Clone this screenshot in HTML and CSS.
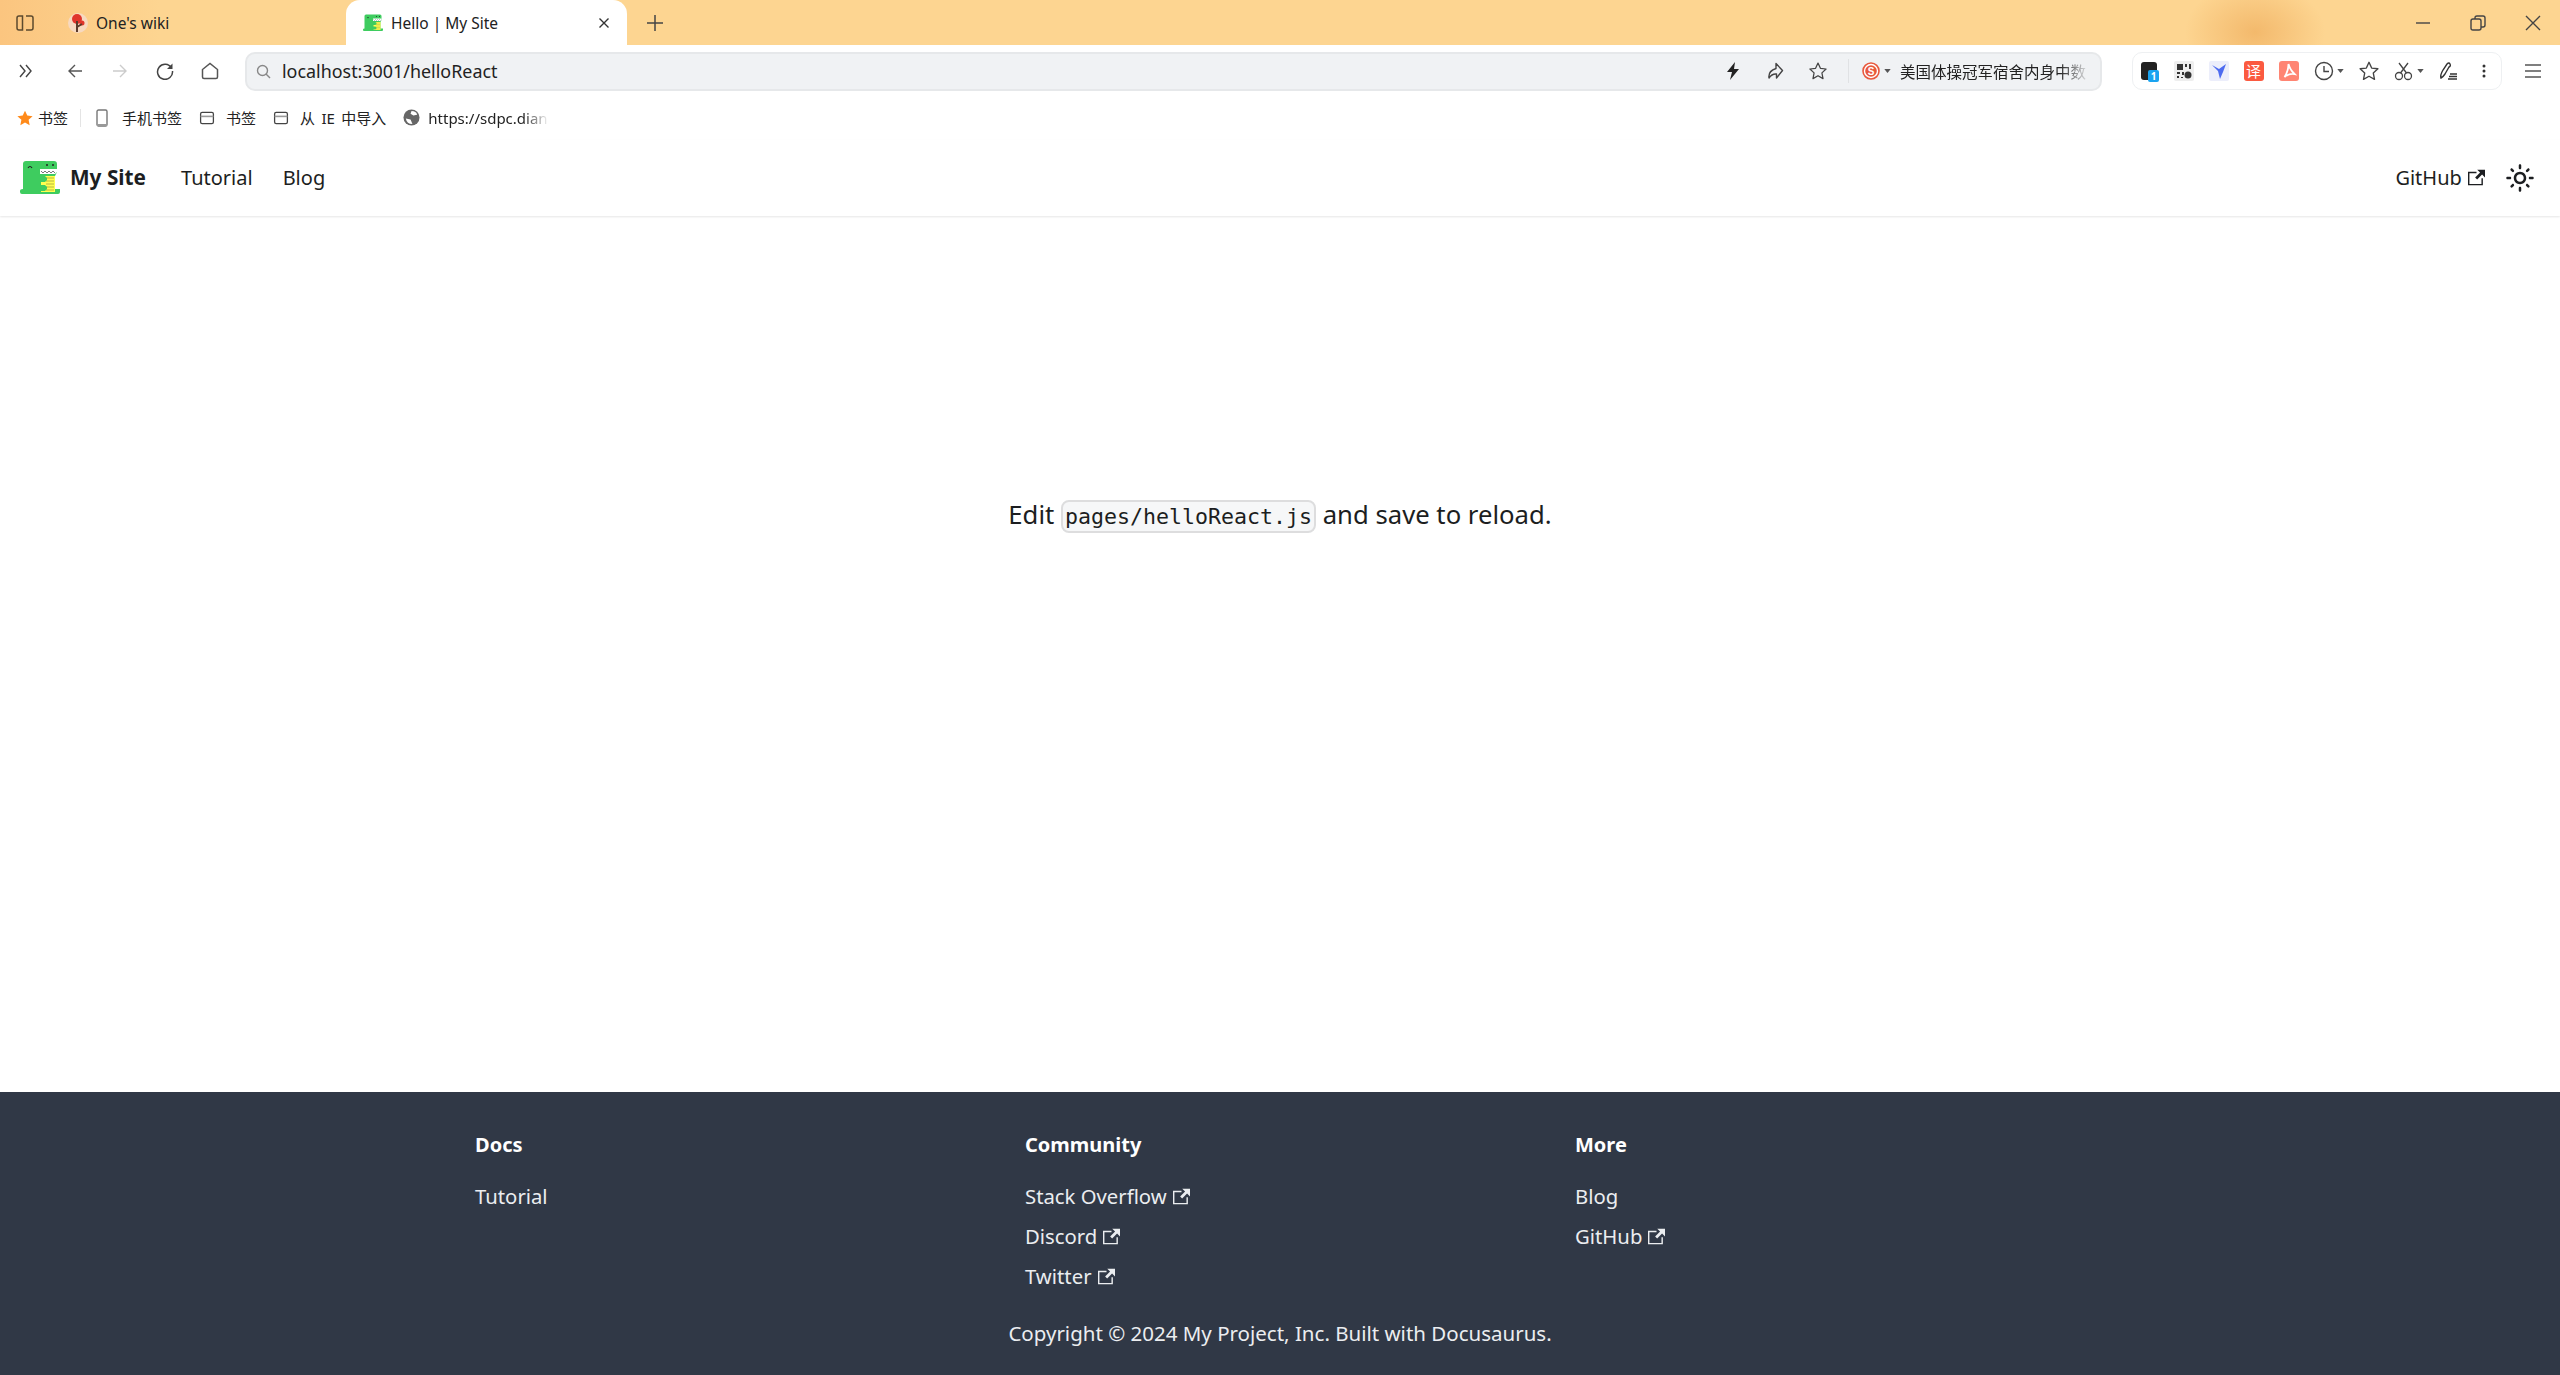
FILE: index.html
```html
<!DOCTYPE html>
<html lang="en">
<head>
    <meta charset="UTF-8">
    <meta name="viewport" content="width=device-width, initial-scale=1.0">
    <title>Hello | My Site</title>
    <link rel="stylesheet" href="styles.css">
</head>
<body>

    <svg class="defs" width="0" height="0">
        <symbol id="ext" viewBox="0 0 24 24"><path fill="currentColor" d="M21 13v10h-21v-19h12v2h-10v15h17v-8h2zm3-12h-10.988l4.035 4-6.977 7.07 2.828 2.828 6.977-7.07 4.125 4.172v-11z"/></symbol>
        <symbol id="dino" viewBox="0 0 40 34">
            <path fill="#3ecc5f" d="M3 3q0-3 3-3h28q3 0 3 3v8l-2 4v13h5v3q0 2-2 2H2q-2 0-2-2v-1q0-2 3-2z"/>
            <path fill="#fff" d="M20 8h17v3l-2 2H20z"/>
            <path fill="none" stroke="#555" stroke-width=".8" d="M21 10l2 2 2-2 2 2 2-2 2 2 2-2 2 2"/>
            <path fill="#ffff50" d="M21 15h14v16H21z"/>
            <path fill="none" stroke="#a5a53c" stroke-width=".8" d="M26 17h8M26 20h8M26 23h8M26 26h8M26 29h8"/>
            <path fill="#3ecc5f" d="M19 15h6l2 2v2l-2 2h-6zM19 24h6l2 2v2l-2 2h-6z"/>
            <path fill="none" stroke="#222" stroke-width="1.200" d="M8 7q2-3 4 0"/>
            <circle cx="27" cy="4" r="1" fill="#222"/><circle cx="33" cy="4" r="1" fill="#222"/>
        </symbol>
        <symbol id="folder" viewBox="0 0 20 20"><path fill="none" stroke="#444" stroke-width="1.600" d="M2 5q0-2 2-2h12q2 0 2 2v10q0 2-2 2H4q-2 0-2-2z"/><path fill="#999" d="M2 7h16v2H2z"/></symbol>
        <symbol id="star" viewBox="0 0 24 24"><path fill="none" stroke="#444" stroke-width="1.500" stroke-linejoin="round" d="M12 2.500l2.900 6.300 6.800.8-5 4.700 1.300 6.800-6-3.400-6 3.400 1.300-6.800-5-4.700 6.800-.8z"/></symbol>
        <symbol id="caret" viewBox="0 0 8 5"><path fill="#555" d="M0 0h8L4 5z"/></symbol>
    </svg>

    <div class="tabbar">
        <span class="tab-side">
            <svg width="18" height="16" viewBox="0 0 18 16"><path fill="none" stroke="#5c4a2e" stroke-width="1.500" d="M3 1h3.500v14H3q-2 0-2-2V3q0-2 2-2zM10 1h5q2 0 2 2v10q0 2-2 2h-5"/></svg>
        </span>
        <div class="tab">
            <svg width="20" height="20" viewBox="0 0 20 20"><circle cx="10" cy="10" r="10" fill="#f7d9c0"/><circle cx="9" cy="6" r="5" fill="#e0352b"/><circle cx="14" cy="10" r="2.500" fill="#e0352b"/><path fill="none" stroke="#5b3a29" stroke-width="2" d="M9 8v11M9 14l5-3"/></svg>
            <span>One's wiki</span>
        </div>
        <div class="tab tab-active">
            <svg width="20" height="20"><use href="#dino"/></svg>
            <span class="tab-name">Hello | My Site</span>
            <svg class="tab-close" width="12" height="12" viewBox="0 0 12 12"><path stroke="#333" stroke-width="1.400" d="M1.500 1.500l9 9M10.500 1.500l-9 9"/></svg>
        </div>
        <svg class="tab-new" width="16" height="16" viewBox="0 0 16 16"><path stroke="#444" stroke-width="1.500" d="M8 0v16M0 8h16"/></svg>
        <div class="winbtns">
            <svg width="16" height="16" viewBox="0 0 16 16"><path stroke="#444" stroke-width="1.400" d="M1 8h14"/></svg>
            <svg width="18" height="18" viewBox="0 0 18 18"><path fill="none" stroke="#444" stroke-width="1.400" d="M2 7q0-2 2-2h6q2 0 2 2v7q0 2-2 2H4q-2 0-2-2zM6 5V4q0-2 2-2h6q2 0 2 2v7q0 2-2 2h-2"/></svg>
            <svg width="16" height="16" viewBox="0 0 16 16"><path stroke="#444" stroke-width="1.400" d="M1 1l14 14M15 1L1 15"/></svg>
        </div>
    </div>

    <div class="toolbar">
        <div class="navbtns">
            <span class="nav-slot nav-slot-first"><svg width="16" height="14" viewBox="0 0 16 14"><path fill="none" stroke="#444" stroke-width="1.400" d="M2 1l5 6-5 6M8 1l5 6-5 6"/></svg></span>
            <span class="nav-slot"><svg width="16" height="16" viewBox="0 0 16 16"><path fill="none" stroke="#555" stroke-width="1.400" d="M15 8H2M8 2L2 8l6 6"/></svg></span>
            <span class="nav-slot"><svg width="16" height="16" viewBox="0 0 16 16"><path fill="none" stroke="#ccc" stroke-width="1.400" d="M1 8h13M8 2l6 6-6 6"/></svg></span>
            <span class="nav-slot"><svg width="18" height="18" viewBox="0 0 18 18"><path fill="none" stroke="#444" stroke-width="1.500" d="M15.500 6A7.500 7.500 0 1 0 16.500 9"/><path fill="#444" d="M16.500 1.500v5.500h-5.500z"/></svg></span>
            <span class="nav-slot"><svg width="18" height="18" viewBox="0 0 18 18"><path fill="none" stroke="#555" stroke-width="1.500" d="M1.500 7.500L9 1.500l7.500 6V15q0 1.500-1.500 1.500H3q-1.500 0-1.500-1.500z"/></svg></span>
        </div>
        <div class="urlbar">
            <svg width="15" height="15" viewBox="0 0 15 15"><circle cx="6.500" cy="6.500" r="5" fill="none" stroke="#888" stroke-width="1.400"/><path stroke="#888" stroke-width="1.400" d="M10 10l4 4"/></svg>
            <span class="url">localhost:3001/helloReact</span>
            <svg class="url-bolt" width="14" height="18" viewBox="0 0 14 18"><path fill="#222" d="M9 0L1 10h5l-2 8 9-11H8z"/></svg>
            <svg class="url-share" width="18" height="18" viewBox="0 0 18 18"><path fill="none" stroke="#444" stroke-width="1.400" stroke-linejoin="round" d="M10 1.500l6.500 7-6 7.500v-4Q6 11.500 3 16q-1-7 7-9.500z"/></svg>
            <svg class="url-star" width="20" height="20"><use href="#star"/></svg>
            <span class="url-sep"></span>
            <svg class="url-sogou" width="18" height="18" viewBox="0 0 18 18"><circle cx="9" cy="9" r="8" fill="#fff" stroke="#e8583c" stroke-width="1.600"/><circle cx="9" cy="9" r="5.800" fill="#e8583c"/><text x="9" y="12.500" class="sogou">S</text></svg>
            <svg class="url-caret" width="7" height="4"><use href="#caret"/></svg>
            <span class="hot">美国体操冠军宿舍内身中数</span>
        </div>
        <div class="extbox">
            <span class="ext-slot"><span class="ext-ink"><span class="ext-badge">1</span></span></span>
            <span class="ext-slot">
                <svg width="20" height="20" viewBox="0 0 20 20"><rect width="20" height="20" rx="2" fill="#eee"/><path fill="#333" d="M3 3h6v6H3zM11 3h2v3h-2zM15 3h2v5h-2zM3 11h3v2H3zM8 11h2v3H8zM3 15h2v2H3zM7 16h2v1H7z"/><circle cx="14" cy="14" r="3.500" fill="#333"/></svg>
            </span>
            <span class="ext-slot">
                <svg width="20" height="20" viewBox="0 0 20 20"><rect width="20" height="20" rx="2" fill="#eceefb"/><path fill="#4d6bf0" d="M3 4l7 4 7-5-3 8-3 7-2-8z"/></svg>
            </span>
            <span class="ext-slot"><span class="ext-square ext-red">译</span></span>
            <span class="ext-slot">
                <svg width="20" height="20" viewBox="0 0 20 20"><rect width="20" height="20" rx="3" fill="#ff8573"/><path fill="none" stroke="#fff" stroke-width="1.800" d="M9.500 3q1 5 6 10-5-1-10 3 4-6 4-13z"/></svg>
            </span>
            <span class="ext-slot">
                <svg width="20" height="20" viewBox="0 0 20 20"><circle cx="10" cy="10" r="8.500" fill="none" stroke="#444" stroke-width="1.400"/><path fill="none" stroke="#444" stroke-width="1.400" d="M10 5v5.500h5"/></svg>
                <svg class="ext-caret" width="7" height="4"><use href="#caret"/></svg>
            </span>
            <span class="ext-slot ext-slot-far"><svg width="22" height="22"><use href="#star"/></svg></span>
            <span class="ext-slot">
                <svg width="20" height="20" viewBox="0 0 20 20"><circle cx="5" cy="15" r="3.500" fill="none" stroke="#444" stroke-width="1.300"/><circle cx="14" cy="15" r="3.500" fill="none" stroke="#444" stroke-width="1.300"/><path fill="none" stroke="#444" stroke-width="1.300" d="M6.500 12L14 2M12.500 12L5 2"/></svg>
                <svg class="ext-caret" width="7" height="4"><use href="#caret"/></svg>
            </span>
            <span class="ext-slot ext-slot-far">
                <svg width="20" height="20" viewBox="0 0 20 20"><path fill="none" stroke="#333" stroke-width="1.400" d="M2 17q-1-3 2-8l4-6q2-2 3 0t-1 3l-4 7q-2 3-4 4zM11 13h7M10 15.500h8M9 18h9"/></svg>
            </span>
            <span class="ext-slot">
                <svg width="4" height="14" viewBox="0 0 4 14"><circle cx="2" cy="2" r="1.500" fill="#333"/><circle cx="2" cy="7" r="1.500" fill="#333"/><circle cx="2" cy="12" r="1.500" fill="#333"/></svg>
            </span>
        </div>
        <svg class="menu-icon" width="16" height="14" viewBox="0 0 16 14"><path stroke="#555" stroke-width="1.300" d="M0 1h16M0 7h16M0 13h16"/></svg>
    </div>

    <div class="bookmarks">
        <span class="bm bm-first">
            <svg width="16" height="16" viewBox="0 0 24 24"><path fill="#ff8a1a" d="M12 1l3.400 7.400 8 .9-6 5.500 1.600 8L12 18.800 5 22.800l1.600-8-6-5.500 8-.9z"/></svg>
            <span>书签</span>
        </span>
        <span class="bm-sep"></span>
        <span class="bm bm-wide bm-phone">
            <svg width="12" height="18" viewBox="0 0 12 18"><rect x="1" y="1" width="10" height="16" rx="1.500" fill="none" stroke="#777" stroke-width="1.400"/><path stroke="#999" stroke-width="2" d="M1 16h10"/></svg>
            <span>手机书签</span>
        </span>
        <span class="bm bm-wide">
            <svg width="16" height="16"><use href="#folder"/></svg>
            <span>书签</span>
        </span>
        <span class="bm bm-wide">
            <svg width="16" height="16"><use href="#folder"/></svg>
            <span class="bm-spaced">从 IE 中导入</span>
        </span>
        <span class="bm">
            <svg width="17" height="17" viewBox="0 0 18 18"><circle cx="9" cy="9" r="8.500" fill="#666"/><path fill="#fff" d="M9 2q5 0 6 4l-4 1-3-2zM3 10l5 1 2 5q-6 0-7-6z"/></svg>
            <span class="bm-fade">https://sdpc.dian</span>
        </span>
    </div>

    <nav class="navbar">
        <a class="brand">
            <svg width="40" height="34"><use href="#dino"/></svg>
            <b>My Site</b>
        </a>
        <a class="navlink">Tutorial</a>
        <a class="navlink">Blog</a>
        <a class="navlink nav-github">GitHub <svg class="ext-icon" width="17" height="17"><use href="#ext"/></svg></a>
        <svg class="sun" width="30" height="30" viewBox="0 0 24 24"><path fill="#1c1e21" d="M12,9c1.65,0,3,1.35,3,3s-1.35,3-3,3s-3-1.35-3-3S10.35,9,12,9 M12,7c-2.76,0-5,2.24-5,5s2.24,5,5,5s5-2.24,5-5 S14.76,7,12,7L12,7z M2,13l2,0c0.55,0,1-0.45,1-1s-0.45-1-1-1l-2,0c-0.55,0-1,0.45-1,1S1.45,13,2,13z M20,13l2,0c0.55,0,1-0.45,1-1 s-0.45-1-1-1l-2,0c-0.55,0-1,0.45-1,1S19.45,13,20,13z M11,2v2c0,0.55,0.45,1,1,1s1-0.45,1-1V2c0-0.55-0.45-1-1-1S11,1.45,11,2z M11,20v2c0,0.55,0.45,1,1,1s1-0.45,1-1v-2c0-0.55-0.45-1-1-1C11.45,19,11,19.45,11,20z M5.99,4.58c-0.39-0.39-1.03-0.39-1.41,0 c-0.39,0.39-0.39,1.03,0,1.41l1.06,1.06c0.39,0.39,1.03,0.39,1.41,0s0.39-1.03,0-1.41L5.99,4.58z M18.36,16.95 c-0.39-0.39-1.03-0.39-1.41,0c-0.39,0.39-0.39,1.03,0,1.41l1.06,1.06c0.39,0.39,1.03,0.39,1.41,0c0.39-0.39,0.39-1.03,0-1.41 L18.36,16.95z M19.42,5.99c0.39-0.39,0.39-1.03,0-1.41c-0.39-0.39-1.03-0.39-1.41,0l-1.06,1.06c-0.39,0.39-0.39,1.03,0,1.41 s1.03,0.39,1.41,0L19.42,5.99z M7.05,18.36c0.39-0.39,0.39-1.03,0-1.41c-0.39-0.39-1.03-0.39-1.41,0l-1.06,1.06 c-0.39,0.39-0.39,1.03,0,1.41s1.03,0.39,1.41,0L7.05,18.36z"/></svg>
    </nav>

    <main class="content">
        <div class="hello">
            <p>Edit <code>pages/helloReact.js</code> and save to reload.</p>
        </div>
    </main>

    <footer class="footer">
        <div class="footer-cols">
            <div class="footer-col">
                <div class="footer-title">Docs</div>
                <a>Tutorial</a>
            </div>
            <div class="footer-col">
                <div class="footer-title">Community</div>
                <a>Stack Overflow <svg class="ext-icon" width="17" height="17"><use href="#ext"/></svg></a>
                <a>Discord <svg class="ext-icon" width="17" height="17"><use href="#ext"/></svg></a>
                <a>Twitter <svg class="ext-icon" width="17" height="17"><use href="#ext"/></svg></a>
            </div>
            <div class="footer-col">
                <div class="footer-title">More</div>
                <a>Blog</a>
                <a>GitHub <svg class="ext-icon" width="17" height="17"><use href="#ext"/></svg></a>
            </div>
        </div>
        <div class="copyright">Copyright © 2024 My Project, Inc. Built with Docusaurus.</div>
    </footer>

</body>
</html>
```

FILE: styles.css
```css
* {
    box-sizing: border-box;
}
body {
    margin: 0;
    height: 100vh;
    display: flex;
    flex-direction: column;
    overflow: hidden;
    background: white;
    color: #1c1e21;
    font-family: "Noto Sans", "Noto Sans CJK SC", sans-serif;
    font-size: 20px;
}
.defs {
    position: absolute;
}
svg {
    flex-shrink: 0;
}

/* browser chrome */
.tabbar {
    height: 45px;
    display: flex;
    align-items: center;
    font-size: 15.500px;
    background:
        radial-gradient(ellipse 70px 50px at 2255px 32px, #f3b96c, rgba(243, 185, 108, 0)),
        linear-gradient(90deg, #fbc57f, #fdd591 160px);
}
.tab-side {
    width: 68px;
    padding-left: 16px;
    display: flex;
}
.tab {
    width: 278px;
    height: 45px;
    display: flex;
    align-items: center;
    gap: 8px;
    color: #222;
}
.tab-active {
    width: 281px;
    padding: 0 17px 0 17px;
    background: white;
    border-radius: 14px 14px 0 0;
}
.tab-name {
    flex: 1;
}
.tab-new {
    margin-left: 20px;
}
.winbtns {
    margin-left: auto;
    width: 145px;
    padding-right: 19px;
    display: flex;
    justify-content: space-between;
    align-items: center;
}
.toolbar {
    height: 50px;
    display: flex;
    align-items: center;
    padding-top: 2px;
}
.navbtns {
    width: 245px;
    display: flex;
    align-items: center;
}
.nav-slot {
    width: 45px;
    display: flex;
    justify-content: center;
}
.nav-slot-first {
    width: 52px;
}
.urlbar {
    width: 1857px;
    height: 39px;
    display: flex;
    align-items: center;
    padding: 0 10px 0 9px;
    background: #f0f2f4;
    border: 2px solid #e6e8ea;
    border-radius: 10px;
}
.url {
    margin-left: 11px;
    flex: 1;
    font-size: 17.900px;
    color: #222;
}
.url-share {
    margin-left: 26px;
}
.url-star {
    margin-left: 24px;
}
.url-sep {
    width: 1px;
    height: 24px;
    background: #e0e2e4;
    margin-left: 20px;
}
.url-sogou {
    margin-left: 13px;
}
.url-caret {
    margin-left: 4px;
}
.sogou {
    font-size: 10px;
    font-weight: bold;
    fill: white;
    text-anchor: middle;
    font-family: "Liberation Sans", sans-serif;
}
.hot {
    width: 190px;
    margin-left: 9px;
    font-size: 15.500px;
    white-space: nowrap;
    overflow: hidden;
    color: #222;
    -webkit-mask-image: linear-gradient(90deg, black 160px, transparent);
    mask-image: linear-gradient(90deg, black 160px, transparent);
}
.extbox {
    margin-left: 30px;
    width: 370px;
    height: 38px;
    display: flex;
    align-items: center;
    border: 1px solid #eef0f2;
    border-radius: 10px;
}
.ext-slot {
    width: 35px;
    flex-shrink: 0;
    height: 24px;
    display: flex;
    align-items: center;
    justify-content: center;
    position: relative;
}
.ext-slot:first-child {
    margin-left: -2px;
}
.ext-slot-far {
    margin-left: 10px;
}
.ext-caret {
    margin-left: 3px;
    margin-right: -10px;
}
.ext-ink {
    width: 16px;
    height: 18px;
    background: #222;
    border-radius: 3px;
}
.ext-badge {
    position: absolute;
    left: 17px;
    top: 11px;
    width: 11px;
    height: 12px;
    background: #1aa3f0;
    color: white;
    font-size: 10px;
    line-height: 12px;
    text-align: center;
    font-weight: bold;
    border-radius: 2px;
}
.ext-square {
    width: 20px;
    height: 20px;
    border-radius: 3px;
    text-align: center;
    color: white;
    font-size: 15px;
    line-height: 20px;
}
.ext-red {
    background: #fb5a40;
}
.menu-icon {
    margin-left: 23px;
}
.bookmarks {
    height: 45px;
    display: flex;
    align-items: center;
    padding-left: 17px;
    font-size: 15px;
    color: #222;
}
.bm {
    display: flex;
    align-items: center;
    gap: 5px;
    white-space: nowrap;
}
.bm-sep {
    width: 1px;
    height: 18px;
    margin: 0 15px 0 12px;
    background: #e4e4e4;
}
.bm-wide {
    gap: 11px;
    margin-right: 17px;
}
.bm-phone {
    gap: 14px;
}
.bm-spaced {
    word-spacing: 2.500px;
}
.bm-fade {
    width: 121px;
    margin-left: 3px;
    overflow: hidden;
    -webkit-mask-image: linear-gradient(90deg, black 95px, transparent);
    mask-image: linear-gradient(90deg, black 95px, transparent);
}

/* site navbar */
.navbar {
    height: 76px;
    flex-shrink: 0;
    display: flex;
    align-items: center;
    padding: 0 25px 0 20px;
    box-shadow: 0 1px 2px 0 rgba(0, 0, 0, 0.1);
    position: relative;
}
.brand {
    display: flex;
    align-items: center;
    gap: 10px;
    margin-right: 35px;
}
.brand b {
    font-weight: 700;
    font-size: 20.800px;
    margin-bottom: 2px;
}
.navlink {
    margin-right: 30px;
    margin-bottom: 2px;
}
.nav-github {
    margin-left: auto;
    margin-right: 20px;
}
.ext-icon {
    margin-left: 1px;
    vertical-align: -1px;
}

/* page */
.content {
    flex: 1;
}
.hello {
    height: 617px;
    display: flex;
    align-items: center;
    justify-content: center;
    font-size: 25.700px;
}
.hello p {
    margin: 0 0 20px;
}
code {
    font-family: "DejaVu Sans Mono", monospace;
    font-size: 21.600px;
    background: #f6f7f8;
    border: 2px solid rgba(0, 0, 0, 0.1);
    border-radius: 8px;
    padding: 2px;
}

/* footer */
.footer {
    height: 283px;
    flex-shrink: 0;
    background: #303846;
    color: #ebedf0;
    padding-top: 40px;
}
.footer-cols {
    display: grid;
    grid-template-columns: repeat(3, 550px);
    width: 1650px;
    margin: 0 auto;
    padding-left: 20px;
}
.footer-col {
    display: flex;
    flex-direction: column;
    align-items: flex-start;
    line-height: 26px;
}
.footer-col a {
    height: 40px;
    display: flex;
    align-items: center;
    gap: 5px;
    font-size: 20.300px;
}
.footer-title {
    color: white;
    font-weight: 700;
    margin-bottom: 18px;
}
.copyright {
    margin-top: 23px;
    text-align: center;
    font-size: 20.500px;
}
```
